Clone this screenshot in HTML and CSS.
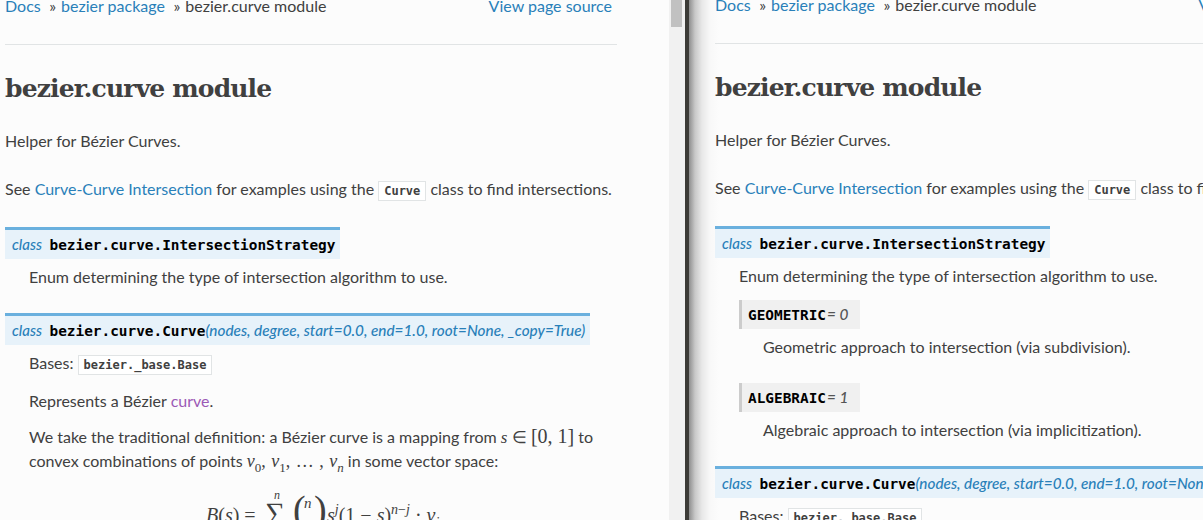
FILE: index.html
```html
<!DOCTYPE html>
<html lang="en">
<head>
  <meta charset="UTF-8">
  <title>bezier.curve module</title>
  <link rel="stylesheet" href="styles.css">
</head>
<body>
  <div class="split">
    <!-- left window -->
    <div class="pane pane-left">
      <div class="doc">
        <div class="crumbs">
          <div><a href="#">Docs</a><span class="sep">»</span><a href="#">bezier package</a><span class="sep">»</span>bezier.curve module</div>
          <a href="#" class="source">View page source</a>
        </div>
        <hr>
        <h1>bezier.curve module</h1>
        <p>Helper for Bézier Curves.</p>
        <p>See <a href="#">Curve-Curve Intersection</a> for examples using the <code>Curve</code> class to find intersections.</p>

        <div class="sig"><em class="kw">class</em><span class="name">bezier.curve.IntersectionStrategy</span></div>
        <div class="desc">
          <p>Enum determining the type of intersection algorithm to use.</p>
        </div>

        <div class="sig"><em class="kw">class</em><span class="name">bezier.curve.Curve</span><em class="args">(nodes, degree, start=0.0, end=1.0, root=None, _copy=True)</em></div>
        <div class="desc">
          <p>Bases: <code>bezier._base.Base</code></p>
          <p>Represents a Bézier <a href="#" class="visited">curve</a>.</p>
          <p class="wrap">We take the traditional definition: a Bézier curve is a mapping from <span class="math"><i>s</i> ∈ <span class="big">[0, 1]</span></span> to convex combinations of points <span class="math math-list"><i>v</i><sub>0</sub>, <i>v</i><sub>1</sub>, … , <i>v<sub>n</sub></i></span> in some vector space:</p>
          <div class="equation">
            <span class="eq-lhs"><i>B</i>(<i>s</i>) =</span>
            <span class="sum"><i class="sum-top">n</i>∑</span>
            <span class="paren">(</span>
            <i class="binom">n</i>
            <span class="paren paren-close">)</span>
            <span><i>s<sup>j</sup></i>(1 − <i>s</i>)<sup><i>n</i>−<i>j</i></sup> · <i>v<sub>i</sub></i></span>
          </div>
        </div>
      </div>
    </div>
    <div class="scrollbar"><div class="thumb"></div></div>
    <div class="divider"></div>

    <!-- right window -->
    <div class="pane pane-right">
      <div class="doc">
        <div class="crumbs">
          <div><a href="#">Docs</a><span class="sep">»</span><a href="#">bezier package</a><span class="sep">»</span>bezier.curve module</div>
          <a href="#" class="source">View page source</a>
        </div>
        <hr>
        <h1>bezier.curve module</h1>
        <p>Helper for Bézier Curves.</p>
        <p>See <a href="#">Curve-Curve Intersection</a> for examples using the <code>Curve</code> class to find intersections.</p>

        <div class="sig"><em class="kw">class</em><span class="name">bezier.curve.IntersectionStrategy</span></div>
        <div class="desc">
          <p>Enum determining the type of intersection algorithm to use.</p>
          <div class="attr"><span class="name">GEOMETRIC</span><em class="value">= 0</em></div>
          <div class="desc attr-desc"><p>Geometric approach to intersection (via subdivision).</p></div>
          <div class="attr"><span class="name">ALGEBRAIC</span><em class="value">= 1</em></div>
          <div class="desc attr-desc"><p>Algebraic approach to intersection (via implicitization).</p></div>
        </div>

        <div class="sig"><em class="kw">class</em><span class="name">bezier.curve.Curve</span><em class="args">(nodes, degree, start=0.0, end=1.0, root=None, _copy=True)</em></div>
        <div class="desc">
          <p>Bases: <code>bezier._base.Base</code></p>
        </div>
      </div>
    </div>
  </div>
</body>
</html>
```

FILE: styles.css
```css
:root {
  --text: #404040;
  --link: #2980b9;
  --visited: #9b59b6;
  --line: #e1e4e5;
  --page: #fcfcfc;
}

html, body {
  margin: 0;
  height: 100%;
  overflow: hidden;
}

body {
  font-family: "Lato", sans-serif;
  font-size: 16px;
  line-height: 24px;
  color: var(--text);
  background: var(--page);
}

a {
  color: var(--link);
  text-decoration: none;
}

a.visited {
  color: var(--visited);
}

.split {
  display: flex;
  height: 520px;
}

.pane {
  overflow: hidden;
  background: var(--page);
}

.pane-left {
  width: 669px;
  flex: none;
  padding-left: 5px;
  box-sizing: border-box;
}

.pane-right {
  flex: 1;
  padding-left: 26px;
  background: linear-gradient(to right, #8e8e8e, #c8c8c8 6px, #e8e8e8 13px, #f8f8f8 21px, var(--page) 30px);
}

.scrollbar {
  width: 16px;
  flex: none;
  background: #f1f1f1;
}

.thumb {
  width: 11px;
  height: 27px;
  margin-left: 2px;
  background: #c1c1c1;
}

.divider {
  width: 4px;
  flex: none;
  background: #3c3b37;
}

.doc {
  width: 612px;
  margin-top: -6px;
}

.pane-right .doc {
  margin-top: -7px;
}

.crumbs {
  display: flex;
  justify-content: space-between;
  white-space: nowrap;
}

.source {
  margin-right: 5px;
}

.sep {
  margin: 0 5px 0 8.5px;
}

hr {
  height: 1px;
  margin: 26px 0 0;
  border: 0;
  background: var(--line);
}

h1 {
  margin: 26px 0 0;
  font-family: "DejaVu Serif", serif;
  font-size: 25px;
  line-height: 36px;
  font-weight: 700;
  letter-spacing: -0.85px;
  white-space: nowrap;
}

p {
  margin: 24px 0 0;
  white-space: nowrap;
}

h1 + p {
  margin-top: 22px;
}

code {
  padding: 2px 5px;
  font-family: "DejaVu Sans Mono", monospace;
  font-size: 12px;
  font-weight: 700;
  background: #fff;
  border: 1px solid var(--line);
}

.sig {
  width: fit-content;
  margin-top: 24px;
  padding: 4px 5px 5px 7px;
  height: 20px;
  line-height: 20px;
  color: var(--link);
  background: #e7f2fa;
  border-top: 3px solid #6ab0de;
  font-size: 14.4px;
  white-space: nowrap;
}

.name {
  font-family: "DejaVu Sans Mono", monospace;
  font-weight: 700;
  color: #000;
}

.kw {
  margin-right: 7.5px;
  font-size: 15px;
  font-weight: 500;
}

.args {
  font-size: 15.3px;
  font-weight: 500;
}

.desc {
  margin-left: 24px;
}

.desc > p:first-child {
  margin-top: 6px;
}

.desc p {
  margin-top: 12px;
}

.desc + .sig {
  margin-top: 24px;
}

.wrap {
  white-space: normal;
}

.attr {
  width: fit-content;
  margin-top: 12px;
  padding: 3px 12px 3px 6px;
  height: 23px;
  line-height: 23px;
  background: #f0f0f0;
  border-left: 3px solid #ccc;
  font-size: 14.4px;
}

.value {
  margin-left: 1px;
  font-size: 15.36px;
  font-weight: 500;
  color: #555;
}

.attr-desc {
  margin-bottom: 24px;
}

.math {
  font-family: "Liberation Serif", serif;
  font-size: 17px;
  line-height: 0;
}

.math-list {
  font-size: 18px;
  word-spacing: 1px;
}

.math sub {
  font-size: 13px;
  line-height: 0;
}

.big {
  font-size: 20px;
  line-height: 0;
}

.equation {
  display: flex;
  align-items: baseline;
  margin-top: 30px;
  padding-left: 177px;
  font-family: "Liberation Serif", serif;
  font-size: 20px;
  line-height: 24px;
  white-space: pre;
}

.equation sup, .equation sub {
  font-size: 14px;
  line-height: 0;
}

.eq-lhs {
  width: 59px;
}

/* sum sign with its upper limit sitting on top */
.sum {
  position: relative;
  width: 28px;
  font-size: 28px;
  line-height: 0;
}

.sum-top {
  position: absolute;
  left: 9px;
  top: -24px;
  font-size: 12px;
  line-height: 12px;
}

.paren {
  width: 10px;
  font-size: 38px;
  line-height: 0;
}

.paren-close {
  width: 13px;
}

.binom {
  width: 11px;
  padding-left: 1px;
  box-sizing: border-box;
  font-size: 15px;
  line-height: 0;
  transform: translateY(-14px);
}
```
